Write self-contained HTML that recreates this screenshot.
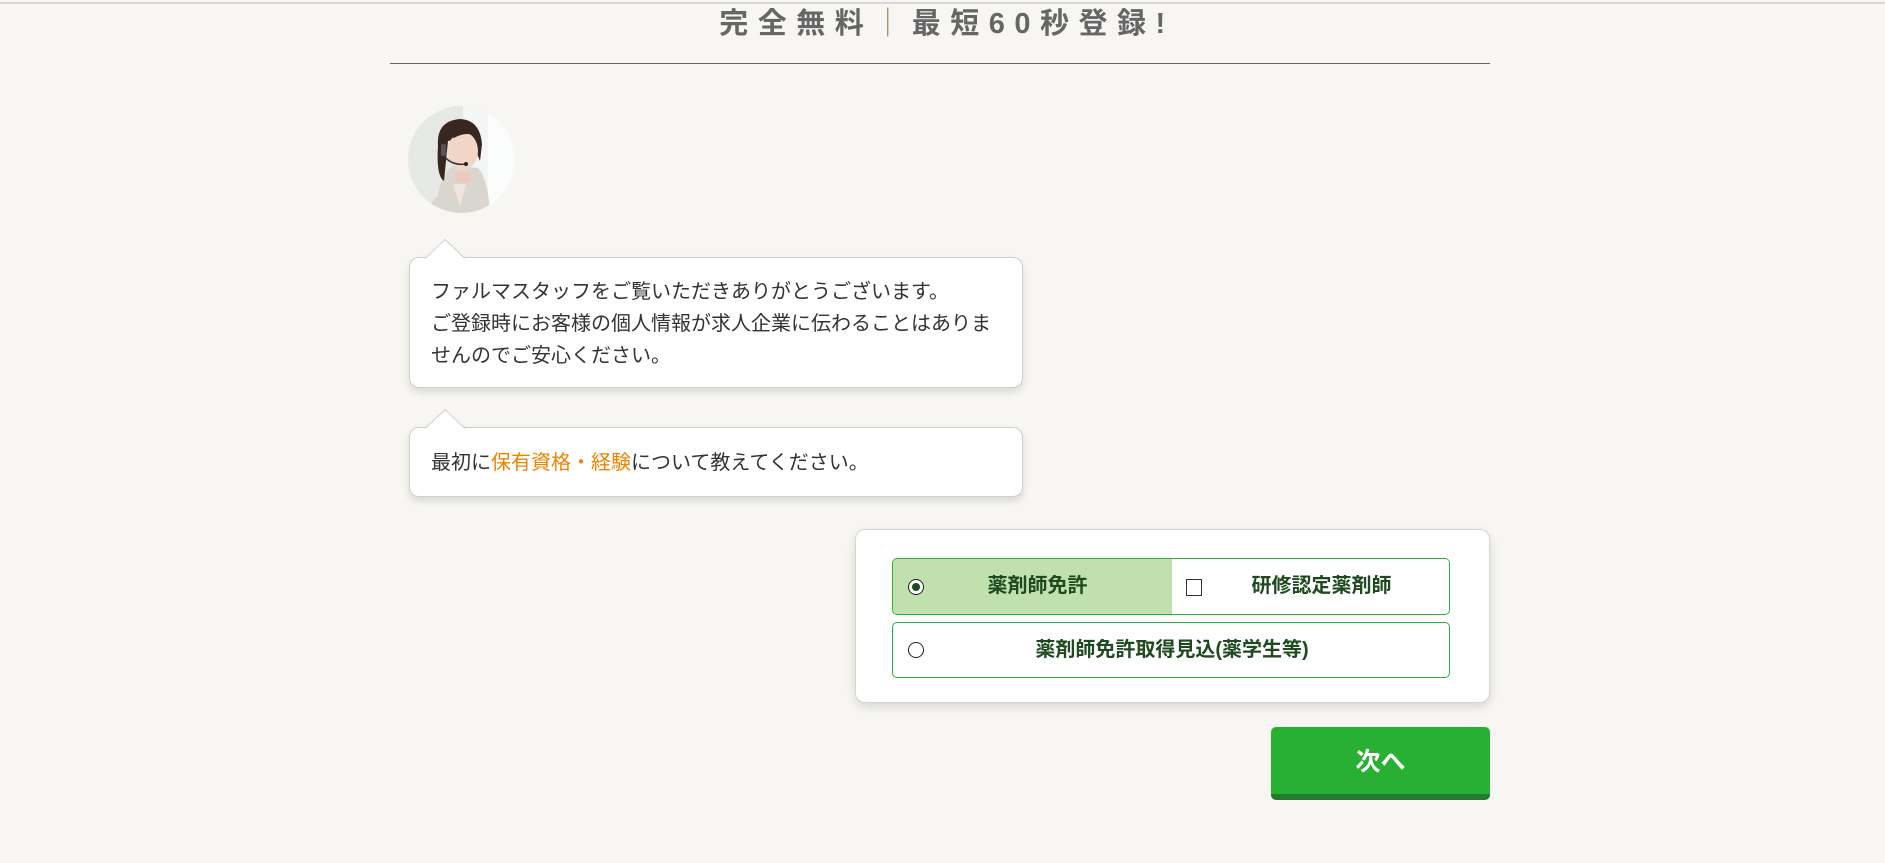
<!DOCTYPE html>
<html><head><meta charset="utf-8">
<style>
*{margin:0;padding:0;box-sizing:border-box}
html,body{width:1885px;height:863px;overflow:hidden;background:#f7f6f2;font-family:"Liberation Sans","Noto Sans CJK JP",sans-serif}
.top{position:absolute;left:0;top:2px;width:1885px;height:2px;background:#d8d8d6}
.title{position:absolute;left:0;width:1885px;top:6px;text-align:center;font-size:29px;font-weight:bold;color:#666;letter-spacing:9.5px;line-height:36px;padding-left:9px}
.title .bar{color:#a08060;font-weight:normal}
.hr{position:absolute;left:390px;top:63px;width:1100px;height:1px;background:#666}
.avatar{position:absolute;left:408px;top:106px;width:107px;height:107px;border-radius:50%;overflow:hidden}
.bubble{position:absolute;left:409px;width:614px;background:#fff;border:1px solid #cfcfcf;border-radius:10px;box-shadow:0 4px 8px rgba(0,0,0,.12);font-size:20px;color:#333;padding-left:21px;line-height:32px}
.tail{position:absolute;left:36px;top:-19px;width:0;height:0}
.tail svg{position:absolute;left:0;top:0}
.b1{top:257px;height:131px;padding-top:18px}
.b2{top:427px;height:70px;padding-top:19px}
.or{color:#f08300}
.card{position:absolute;left:855px;top:529px;width:635px;height:174px;background:#fff;border:1px solid #d5d5d5;border-radius:10px;box-shadow:0 4px 10px rgba(0,0,0,.12)}
.row{position:absolute;left:36px;width:558px;border:1px solid #2bb03a;border-radius:5px;overflow:hidden;font-size:20px;color:#1f4a1f;font-weight:bold}
.r1{top:28px;height:57px}
.r2{top:92px;height:56px}
.half{position:absolute;top:0;height:100%;line-height:55px}
.radio{position:absolute;width:16px;height:16px;border:1.5px solid #222;border-radius:50%;background:#fff}
.radio.on::after{content:"";position:absolute;left:2.5px;top:2.5px;width:8px;height:8px;border-radius:50%;background:#1f4a1f}
.chk{position:absolute;width:16px;height:17px;border:1.5px solid #333;background:#fff}
.btn{position:absolute;left:1271px;top:727px;width:219px;height:73px;background:#28b034;border-radius:5px;border-bottom:6px solid #247a2e;color:#fff;font-size:25px;font-weight:bold;text-align:center;line-height:70px}
</style></head><body>
<div class="top"></div>
<div class="title">完全無料<span class="bar">｜</span>最短60秒登録!</div>
<div class="hr"></div>
<div class="avatar">
<svg width="107" height="107" viewBox="0 0 107 107">
<rect width="107" height="107" fill="#e6e8e6"/>
<rect x="55" y="0" width="52" height="107" fill="#f4f6f6"/>
<rect x="80" y="0" width="27" height="107" fill="#fbfcfc"/>
<path d="M30 90 Q32 70 45 60 L70 62 Q80 72 82 107 L22 107 Q22 95 30 90Z" fill="#d9d6d0"/>
<path d="M45 78 L52 100 L58 78Z" fill="#f0e4dc"/>
<path d="M30 40 Q28 15 52 13 Q72 14 74 38 L72 55 L66 40 Q55 30 40 35 L36 75 Q28 70 30 40Z" fill="#3a2620"/>
<ellipse cx="55" cy="45" rx="15" ry="19" fill="#f1d5c6"/>
<path d="M48 66 L62 66 L63 76 L47 76Z" fill="#ecc9b8"/>
<path d="M38 30 Q40 18 54 18 Q68 18 70 32 Q60 24 46 32Z" fill="#3a2620"/>
<rect x="33" y="38" width="5" height="12" rx="2" fill="#555"/>
<path d="M36 50 Q44 60 58 58" stroke="#333" stroke-width="1.5" fill="none"/>
<circle cx="58" cy="58" r="2" fill="#222"/>
</svg>
</div>
<div class="bubble b1"><div class="tail"><svg width="40" height="20" style="left:-21px"><path d="M0 19.5 L20 0.5 L40 19.5" fill="#fff" stroke="#cfcfcf" stroke-width="1"/><rect x="1" y="19" width="38" height="2" fill="#fff"/></svg></div>ファルマスタッフをご覧いただきありがとうございます。<br>ご登録時にお客様の個人情報が求人企業に伝わることはありま<br>せんのでご安心ください。</div>
<div class="bubble b2"><div class="tail"><svg width="40" height="20" style="left:-21px"><path d="M0 19.5 L20 0.5 L40 19.5" fill="#fff" stroke="#cfcfcf" stroke-width="1"/><rect x="1" y="19" width="38" height="2" fill="#fff"/></svg></div>最初に<span class="or">保有資格・経験</span>について教えてください。</div>
<div class="card">
 <div class="row r1">
  <div class="half" style="left:0;width:279px;background:#c0e0ae"><span class="radio on" style="left:15px;top:20px"></span><span style="position:absolute;left:0;width:279px;text-align:center;padding-left:10px">薬剤師免許</span></div>
  <div class="half" style="left:279px;width:279px;background:#fff"><span class="chk" style="left:14px;top:20px"></span><span style="position:absolute;left:0;width:279px;text-align:center;padding-left:20px">研修認定薬剤師</span></div>
 </div>
 <div class="row r2">
  <div class="half" style="left:0;width:558px;line-height:54px"><span class="radio" style="left:15px;top:19px"></span><span style="position:absolute;left:0;width:558px;text-align:center;padding-left:0px">薬剤師免許取得見込(薬学生等)</span></div>
 </div>
</div>
<div class="btn">次へ</div>
</body></html>
